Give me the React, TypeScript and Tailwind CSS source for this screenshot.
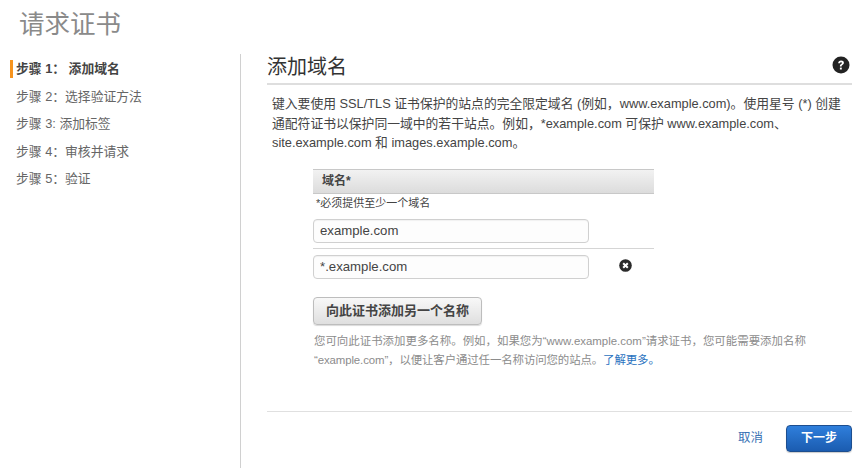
import React from "react";

const fontStack = "font-['Liberation_Sans','Noto_Sans_CJK_SC',sans-serif]";

const steps = [
  { label: "步骤 1： 添加域名", active: true },
  { label: "步骤 2：选择验证方法" },
  { label: "步骤 3: 添加标签" },
  { label: "步骤 4：审核并请求" },
  { label: "步骤 5：验证" },
];

const DomainInput = ({ value }: { value: string }) => (
  <input
    readOnly
    value={value}
    className="block h-6 w-[276px] rounded border border-[#d0d0d0] bg-[#fdfdfd] px-1.5 text-[13.2px] text-[#444] shadow-[inset_0_1px_1px_rgba(0,0,0,0.05)] outline-none"
  />
);

const App: React.FC = () => {
  return (
    <div className={`flex h-[468px] w-[865px] flex-col overflow-hidden bg-white ${fontStack}`}>
      <h1 className="h-[54px] pl-[19px] pt-[7px] text-[25.5px] leading-[34px] text-[#8a8a8a]">请求证书</h1>

      <div className="flex min-h-0 flex-1">
        {/* Steps */}
        <nav className="w-[241px] shrink-0 border-r border-[#d0d0d0] pt-[1px]">
          {steps.map((step) => (
            <div key={step.label} className="flex h-[27.5px] items-center pl-2.5">
              <span className={`mr-[3px] h-[18px] w-[3px] ${step.active ? "bg-[#f7941e]" : ""}`} />
              <span className={`whitespace-pre text-[12.8px] ${step.active ? "font-bold text-[#444]" : "text-[#666]"}`}>
                {step.label}
              </span>
            </div>
          ))}
        </nav>

        {/* Main panel */}
        <main className="ml-[26px] flex w-[585px] flex-col">
          <div className="flex h-[31px] items-center justify-between border-b-2 border-[#dedede] pb-1.5">
            <h2 className="pt-0.5 text-[20px] leading-7 text-[#333]">添加域名</h2>
            <svg width="18" height="18" viewBox="0 0 18 18" className="mr-0.5 mb-0.5">
              <circle cx="9" cy="9" r="8.5" fill="#222" />
              <path
                d="M6.2 7.1c0-1.7 1.3-2.6 2.9-2.6 1.6 0 2.8.9 2.8 2.3 0 1.2-.7 1.7-1.5 2.2-.6.4-.8.6-.8 1.2v.3H7.9v-.5c0-1 .4-1.5 1.2-2 .6-.4.9-.6.9-1 0-.4-.4-.7-.9-.7-.6 0-1 .4-1 1H6.2z"
                fill="#fff"
              />
              <rect x="7.9" y="11.6" width="1.9" height="1.9" fill="#fff" />
            </svg>
          </div>

          <p className="ml-[5px] mt-[9px] text-[12.8px] leading-[19.5px] text-[#444]">
            键入要使用 SSL/TLS 证书保护的站点的完全限定域名 (例如，www.example.com)。使用星号 (*) 创建
            <br />
            通配符证书以保护同一域中的若干站点。例如，*example.com 可保护 www.example.com、
            <br />
            site.example.com 和 images.example.com。
          </p>

          <section className="ml-[46px] mt-[16px] w-[341px]">
            <div className="flex h-[25px] items-center border-t border-b border-[#c8c8c8] bg-gradient-to-b from-[#f2f2f2] to-[#dcdcdc] pl-[9px] text-xs font-bold text-[#444]">
              域名*
            </div>
            <p className="pl-[3px] pt-[1px] text-[11px] leading-[16px] text-[#444]">*必须提供至少一个域名</p>
            <div className="mt-2 border-b border-[#d5d5d5] pb-[5px]">
              <DomainInput value="example.com" />
            </div>
            <div className="mt-1.5 flex items-center">
              <DomainInput value="*.example.com" />
              <svg width="13" height="13" viewBox="0 0 13 13" className="ml-[30px] -mt-0.5">
                <circle cx="6.5" cy="6.5" r="6.3" fill="#2a2a2a" />
                <path d="M4.2 4.2l4.6 4.6M8.8 4.2l-4.6 4.6" stroke="#fff" strokeWidth="2" />
              </svg>
            </div>

            <button className="mt-[18px] h-[28px] w-[169px] rounded border border-[#bdbdbd] bg-gradient-to-b from-[#f8f8f8] to-[#dfdfdf] text-[13px] font-bold text-[#444] shadow-[0_1px_1px_rgba(0,0,0,0.15)]">
              向此证书添加另一个名称
            </button>
          </section>

          <div className="ml-[47px] mt-[7px] text-[11.45px] leading-[19.5px] text-[#8c8c8c]">
            <p>您可向此证书添加更多名称。例如，如果您为“www.example.com”请求证书，您可能需要添加名称</p>
            <p className="tracking-[-0.12px]">
              “example.com”，以便让客户通过任一名称访问您的站点。<span className="text-[#2a72c0]">了解更多。</span>
            </p>
          </div>

          <div className="mt-[40px] flex items-center justify-end border-t border-[#e0e0e0] pt-[13px]">
            <span className="mr-[23px] text-[12.5px] text-[#3b73b5]">取消</span>
            <button className="h-[27px] w-[66px] rounded border border-[#1d4e8f] bg-gradient-to-b from-[#2f7fdc] to-[#1b5cb0] text-xs font-bold text-white shadow-[0_1px_1px_rgba(0,0,0,0.2)]">
              下一步
            </button>
          </div>
        </main>
      </div>
    </div>
  );
};

export default App;
